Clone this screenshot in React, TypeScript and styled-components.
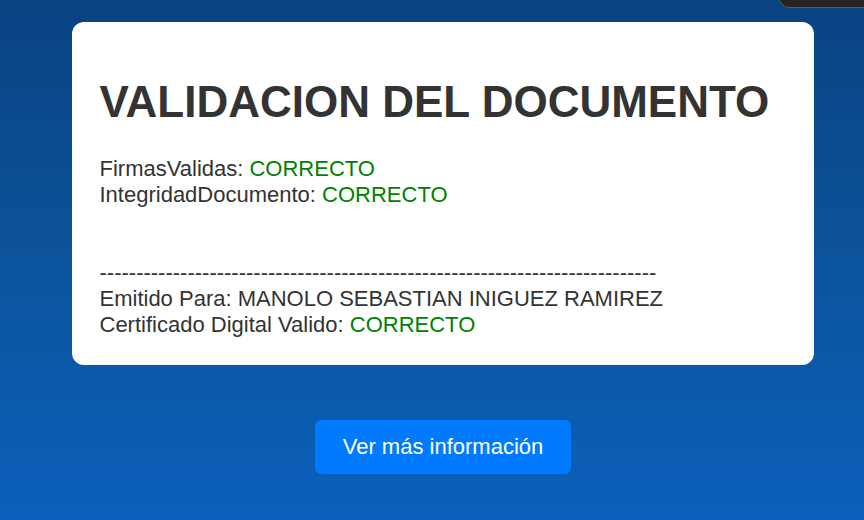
import React from "react";
import styled, { createGlobalStyle } from "styled-components";

const GlobalStyle = createGlobalStyle`
  html, body {
    margin: 0;
    padding: 0;
  }
  body {
    font-family: "Liberation Sans", Arial, sans-serif;
    font-size: 22px;
    color: #333333;
    background: #0b4f9c;
    overflow: hidden;
  }
`;

const Page = styled.div`
  position: relative;
  width: 864px;
  height: 520px;
  overflow: hidden;
  background: linear-gradient(to bottom, #0a4282 0%, #0b5299 45%, #0c60bb 100%);
`;

const Column = styled.main`
  display: flex;
  flex-direction: column;
  align-items: center;
  width: 742px;
  margin-left: 72px;
  padding-top: 22px;
`;

const Card = styled.section`
  align-self: stretch;
  background: #ffffff;
  border-radius: 12px;
  padding: 25px 26px 27px 27.5px;
`;

const Title = styled.h1`
  margin: 29.5px 0;
  font-size: 44px;
  font-weight: bold;
  line-height: normal;
  color: #333333;
`;

const Block = styled.div<{ $gap?: number }>`
  margin-top: ${(p) => p.$gap ?? 0}px;
  line-height: normal;
`;

const Line = styled.div`
  white-space: nowrap;
`;

const Ok = styled.span`
  color: #008000;
`;

const Button = styled.button`
  margin-top: 55px;
  background: #007bff;
  color: #ffffff;
  border: none;
  border-radius: 6px;
  padding: 14px 28px;
  font-family: "Liberation Sans", Arial, sans-serif;
  font-size: 22px;
  line-height: 26px;
  cursor: pointer;
`;

const CornerPanel = styled.div`
  position: absolute;
  top: -30px;
  left: 779px;
  width: 120px;
  height: 36px;
  background: #2a2222;
  border: 1px solid #5a5a5a;
  border-radius: 10px;
`;

export default function App() {
  const dashes = "-".repeat(76);
  return (
    <>
      <GlobalStyle />
      <Page>
        <CornerPanel />
        <Column>
          <Card>
            <Title>VALIDACION DEL DOCUMENTO</Title>
            <Block>
              <Line>
                FirmasValidas: <Ok>CORRECTO</Ok>
              </Line>
              <Line>
                IntegridadDocumento: <Ok>CORRECTO</Ok>
              </Line>
            </Block>
            <Block $gap={52}>
              <Line>{dashes}</Line>
              <Line>Emitido Para: MANOLO SEBASTIAN INIGUEZ RAMIREZ</Line>
              <Line>
                Certificado Digital Valido: <Ok>CORRECTO</Ok>
              </Line>
            </Block>
          </Card>
          <Button>Ver más información</Button>
        </Column>
      </Page>
    </>
  );
}
